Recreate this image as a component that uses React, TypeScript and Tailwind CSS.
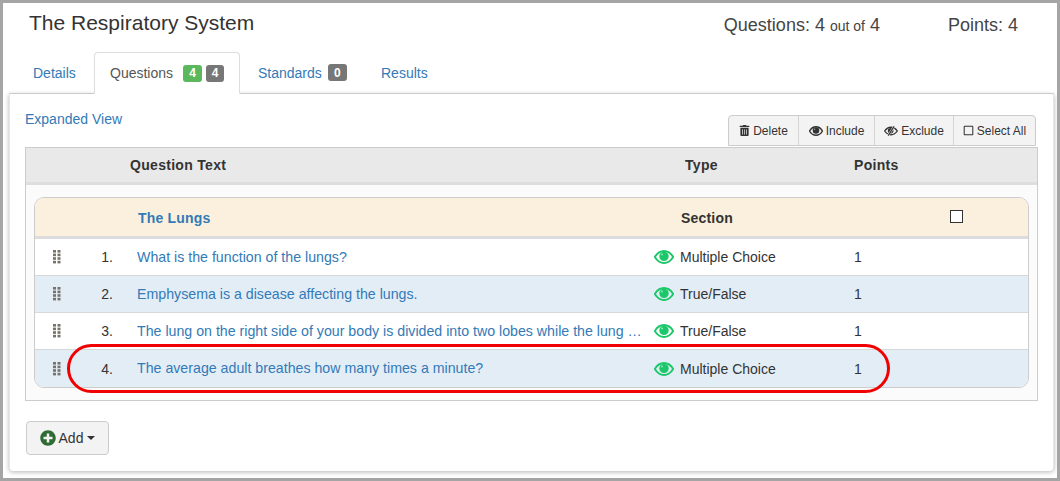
import { FaPlusCircle, FaRegSquare, FaTrashAlt } from "react-icons/fa";

const rows = [
  { n: 1, text: "What is the function of the lungs?", type: "Multiple Choice" },
  { n: 2, text: "Emphysema is a disease affecting the lungs.", type: "True/False" },
  {
    n: 3,
    text: "The lung on the right side of your body is divided into two lobes while the lung on the left side is divided into three lobes.",
    type: "True/False",
  },
  { n: 4, text: "The average adult breathes how many times a minute?", type: "Multiple Choice" },
];

const Grip = () => (
  <svg width="8" height="14" viewBox="0 0 8 14" className="fill-[#77736b]">
    {[0, 3.6, 7.2, 10.8].map((y) => (
      <g key={y}>
        <rect x="0" y={y} width="3" height="2.6" />
        <rect x="4.5" y={y} width="3" height="2.6" />
      </g>
    ))}
  </svg>
);

// open eye: almond outline with a solid pupil
const Eye = ({ className }: { className: string }) => (
  <svg viewBox="0 0 20 14" className={className}>
    <path
      d="M0.8 7C3.2 3 6.3 1 10 1s6.8 2 9.2 6c-2.4 4-5.5 6-9.2 6S3.2 11 0.8 7z"
      fill="none"
      stroke="currentColor"
      strokeWidth="2"
    />
    <circle cx="10" cy="6.4" r="4.7" fill="currentColor" />
    <circle cx="8" cy="4.6" r="1" fill="#fff" fillOpacity="0.5" />
  </svg>
);

// same eye with a slash through it
const EyeOff = ({ className }: { className: string }) => (
  <svg viewBox="0 0 20 14" className={className}>
    <path
      d="M1 7C3.4 3.4 6.4 1.6 10 1.6S16.6 3.4 19 7c-2.4 3.6-5.4 5.4-9 5.4S3.4 10.6 1 7z"
      fill="none"
      stroke="currentColor"
      strokeWidth="1.9"
    />
    <circle cx="9.5" cy="6.8" r="4" fill="currentColor" />
    <path d="M14.5 0.5L6 13.5" stroke="#f3f3f3" strokeWidth="3" />
    <path d="M14.5 0.5L6 13.5" stroke="currentColor" strokeWidth="1.7" />
  </svg>
);

const ToolButton = ({ icon, label, w }: { icon: React.ReactNode; label: string; w: string }) => (
  <button className={`${w} h-full flex items-center justify-center gap-[3px] border-r border-[#d4d4d4] last:border-r-0 text-[#333] text-xs`}>
    {icon}
    {label}
  </button>
);

const App = () => {
  return (
    <div className="relative w-[1060px] h-[481px] overflow-hidden bg-white border-[3px] border-[#a5a5a5] font-['Liberation_Sans',Arial,sans-serif] text-sm text-[#333]">
      {/* Header */}
      <div className="flex items-center h-[41px] pl-[26px] pr-[39px] pb-[1px]">
        <h1 className="text-[21px] text-[#333] flex-1">The Respiratory System</h1>
        <div className="text-lg text-[#444] mr-[68px] mt-[3px]">
          Questions: 4 <span className="text-sm">out of</span> 4
        </div>
        <div className="text-lg text-[#444] mt-[3px]">Points: 4</div>
      </div>

      {/* Tabs */}
      <div className="flex items-end h-[50px] ml-[6px] mr-[3px] pt-[9px] border-b border-[#ddd]">
        <a className="pl-[24px] h-[41px] leading-[43px] text-[#337ab7] w-[85px]">Details</a>
        <div className="h-[42px] -mb-px flex items-center w-[146px] pl-[15px] bg-white border border-[#ddd] border-b-white rounded-t text-[#555]">
          Questions
          <span className="ml-[10px] w-[19px] h-[17px] rounded-[3px] bg-[#5cb85c] text-white text-xs font-bold flex items-center justify-center">4</span>
          <span className="ml-[4px] w-[18px] h-[17px] rounded-[3px] bg-[#777] text-white text-xs font-bold flex items-center justify-center">4</span>
        </div>
        <div className="h-[41px] flex items-center pl-[18px] w-[141px] text-[#337ab7]">
          Standards
          <span className="ml-[6px] w-[19px] h-[17px] rounded-[3px] bg-[#777] text-white text-xs font-bold flex items-center justify-center">0</span>
        </div>
        <a className="h-[41px] leading-[43px] text-[#337ab7]">Results</a>
      </div>

      {/* Panel */}
      <div className="ml-[6px] mr-[3px] h-[377px] bg-white rounded-b shadow-[0_1px_5px_rgba(0,0,0,0.3)] border-x border-[#e6e6e6] px-[15px] pt-[16px]">
        <div className="flex justify-between h-[37px]">
          <a className="text-[#337ab7] leading-[18px]">Expanded View</a>
          <div className="flex items-center h-[31px] w-[308px] mt-[5px] mr-[2px] bg-[#f3f3f3] border border-[#ccc] rounded-t-[4px]">
            <ToolButton w="w-[70px]" label="Delete" icon={<FaTrashAlt className="size-[11px]" />} />
            <ToolButton w="w-[76px]" label="Include" icon={<Eye className="w-[14px] h-[10px]" />} />
            <ToolButton w="w-[79px]" label="Exclude" icon={<EyeOff className="w-[14px] h-[10px]" />} />
            <ToolButton w="w-[81px]" label="Select All" icon={<FaRegSquare className="size-[11px]" />} />
          </div>
        </div>

        {/* Question table */}
        <div className="relative h-[254px] bg-[#fbfbfb] border border-[#ccc]">
          <div className="flex items-center h-[37px] bg-[#e9e9e9] border-b-[3px] border-[#dedede] font-bold tracking-[0.3px] text-[#333]">
            <span className="ml-[104px] w-[555px]">Question Text</span>
            <span className="w-[169px]">Type</span>
            <span>Points</span>
          </div>

          <div className="mx-[8px] mt-[12px] border border-[#ccc] rounded-[10px] overflow-hidden bg-white">
            <div className="flex items-center h-[41px] pt-[2px] bg-[#faf0dd] border-b-[3px] border-[#dcdcdc] font-bold tracking-[0.2px]">
              <span className="ml-[103px] w-[543px] text-[#337ab7]">The Lungs</span>
              <span className="w-[269px] text-[#333]">Section</span>
              <span className="size-[13px] -mt-[3px] bg-white border border-[#333]" />
            </div>
            {rows.map((r, i) => (
              <div
                key={r.n}
                className={`flex items-center h-[37px] ${i < 3 ? "border-b border-[#d8d8d8]" : ""} ${i % 2 ? "bg-[#e3edf6]" : "bg-white"}`}
              >
                <span className="ml-[18px] w-[48px] flex"><Grip /></span>
                <span className="w-[12px] mr-[24px] whitespace-nowrap flex justify-end">{r.n}.</span>
                <a className="w-[505px] truncate text-[14.2px] text-[#337ab7] mr-[12px]">{r.text}</a>
                <Eye className="w-[20px] h-[14px] text-[#1cc76a] mr-[6px]" />
                <span className="w-[174px] text-[#333]">{r.type}</span>
                <span className="text-[#333]">1</span>
              </div>
            ))}
          </div>
        </div>

        <button className="mt-[20px] ml-px flex items-center justify-center gap-[3px] w-[83px] h-[34px] bg-[#f3f3f3] border border-[#ccc] rounded text-[#333]">
          <FaPlusCircle className="size-[16px] text-[#2f6b34]" />
          Add
          <span className="ml-[1px] border-x-4 border-x-transparent border-t-4 border-t-[#333]" />
        </button>
      </div>

      {/* Red annotation */}
      <div className="absolute left-[64px] top-[341px] w-[823px] h-[49px] rounded-full border-[3px] border-[#f00000]" />
    </div>
  );
};

export default App;
